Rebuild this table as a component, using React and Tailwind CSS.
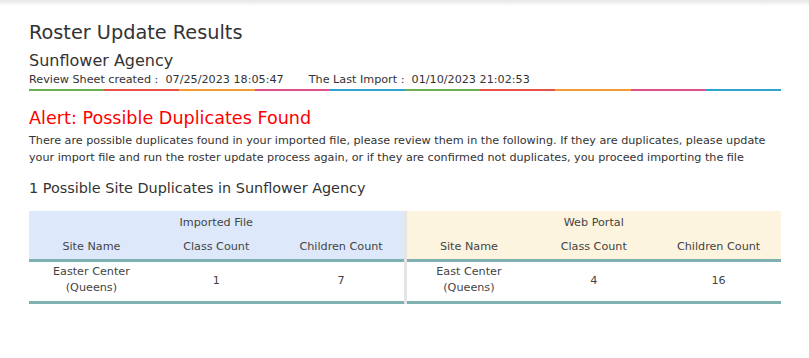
import React from 'react';

const STRIPE = ['#6ab04c', '#e5534b', '#f39c33', '#e2508c', '#2ea3d0'];

const imported = { title: 'Imported File', site: ['Easter Center', '(Queens)'], classes: 1, children: 7 };
const portal = { title: 'Web Portal', site: ['East Center', '(Queens)'], classes: 4, children: 16 };

function SourceTable({ data, headBg }) {
  return (
    <div className="flex-1 flex flex-col">
      <div className={`${headBg} border-b-[3px] border-[#7fb1b1]`}>
        <div className="h-[22px] flex items-center justify-center">{data.title}</div>
        <div className="h-[26px] grid grid-cols-3 items-center text-center">
          <div>Site Name</div>
          <div>Class Count</div>
          <div>Children Count</div>
        </div>
      </div>
      <div className="h-[42px] grid grid-cols-3 items-center text-center border-b-[3px] border-[#7fb1b1]">
        <div className="self-start pt-[2px] leading-[16px]">
          {data.site[0]}
          <br />
          {data.site[1]}
        </div>
        <div className="pb-[2px]">{data.classes}</div>
        <div className="pb-[2px]">{data.children}</div>
      </div>
    </div>
  );
}

export default function App() {
  return (
    <div className="min-h-[358px] bg-white text-[#333] font-['DejaVu_Sans',sans-serif]">
      <div className="h-[6px] bg-gradient-to-b from-[#e6e6e6] to-white" />
      <div className="w-[752px] ml-[29px]">
        <h1 className="mt-[15px] text-[19.3px] leading-[24px]">Roster Update Results</h1>
        <h2 className="mt-[6px] text-[16px] leading-[20px]">Sunflower Agency</h2>
        <div className="mt-[1px] text-[11.2px] leading-[16px] whitespace-pre">
          <span>{'Review Sheet created :  07/25/2023 18:05:47'}</span>
          <span className="ml-[25px]">{'The Last Import :  01/10/2023 21:02:53'}</span>
        </div>
        <div className="mt-[1px] flex h-[2px]">
          {[...STRIPE, ...STRIPE].map((c, i) => (
            <div key={i} className="flex-1" style={{ backgroundColor: c }} />
          ))}
        </div>

        <h3 className="mt-[16px] text-[17.6px] leading-[22px] text-[#ff0000]">Alert: Possible Duplicates Found</h3>
        <p className="mt-[3px] text-[11.2px] leading-[17px]">
          There are possible duplicates found in your imported file, please review them in the following. If they are duplicates, please update
          your import file and run the roster update process again, or if they are confirmed not duplicates, you proceed importing the file
        </p>

        <h4 className="mt-[13px] text-[14.4px] leading-[18px]">1 Possible Site Duplicates in Sunflower Agency</h4>

        <div className="mt-[14px] flex text-[11.2px] leading-[15px] text-[#444]">
          <SourceTable data={imported} headBg="bg-[#dde9fb]" />
          <div className="w-[3px] bg-[#e5e5e5]" />
          <SourceTable data={portal} headBg="bg-[#fdf4df]" />
        </div>
      </div>
    </div>
  );
}
